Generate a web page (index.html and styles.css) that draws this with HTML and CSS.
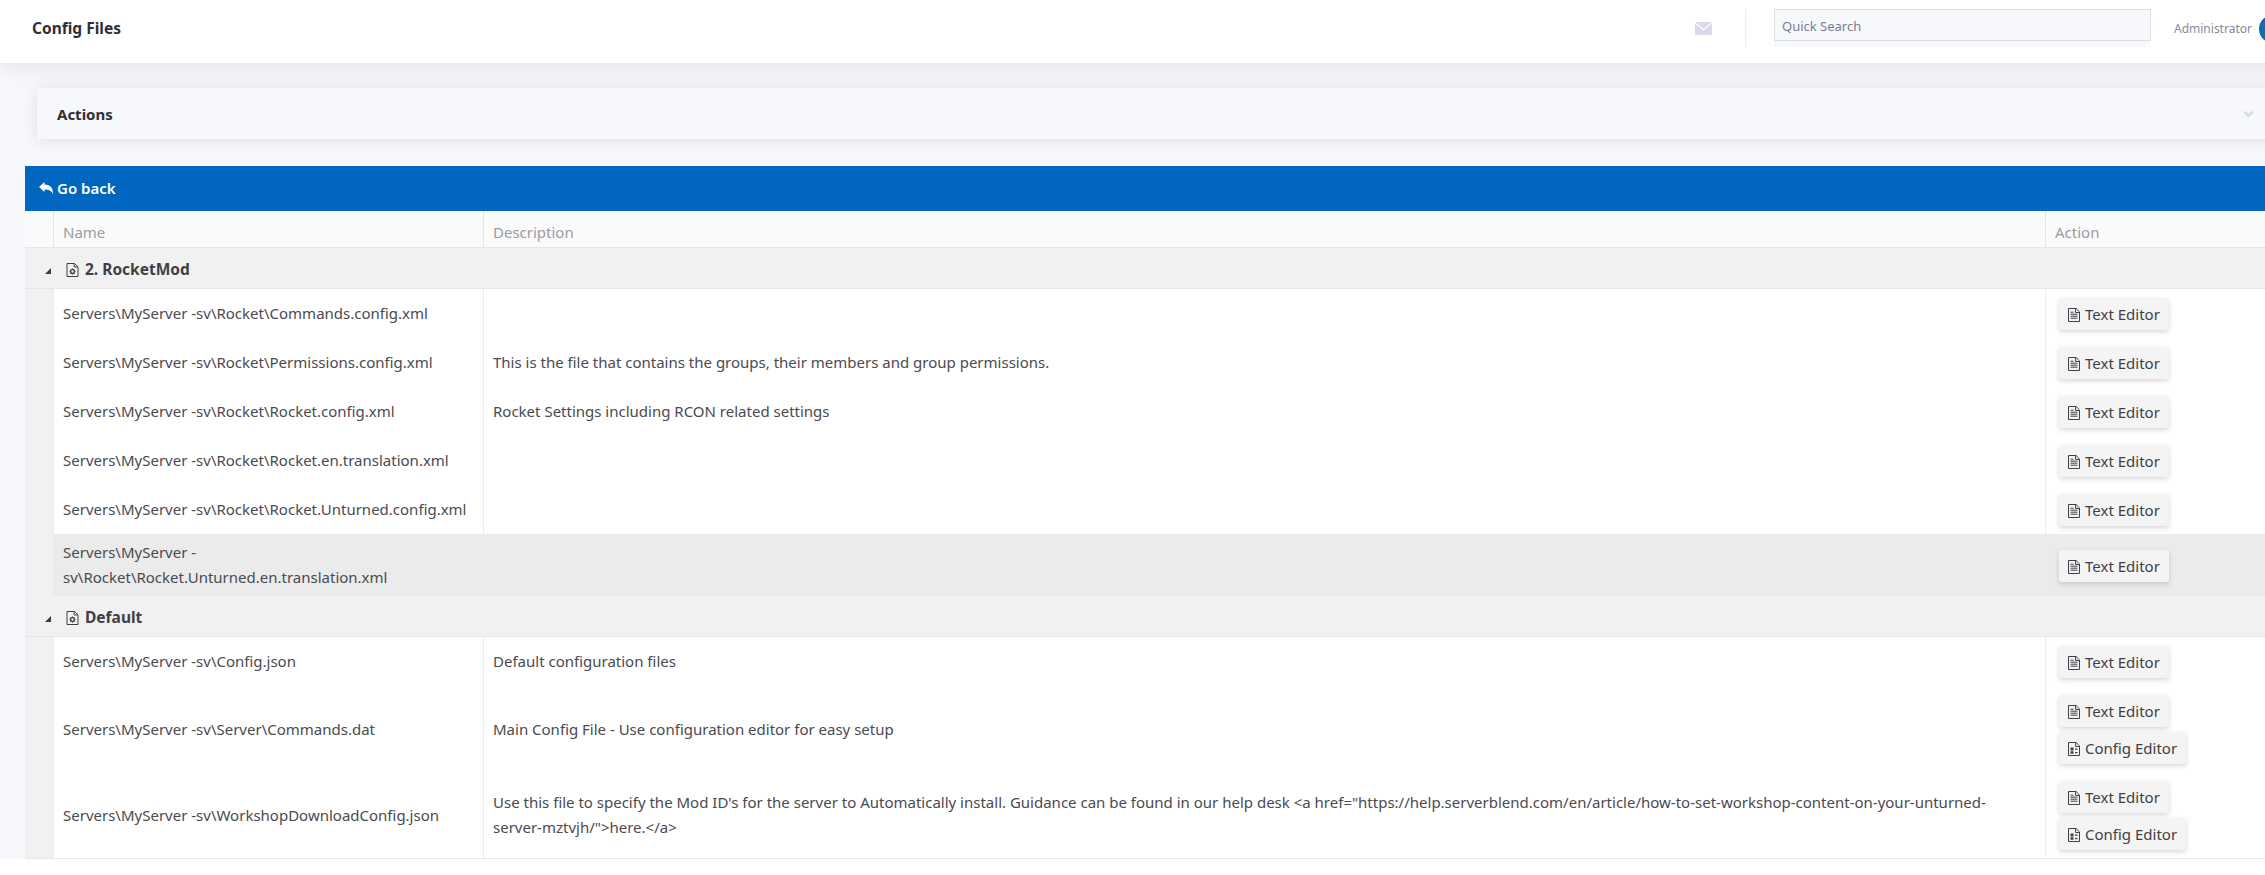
FILE: index.html
```html
<!DOCTYPE html>
<html lang="en">
<head>
<meta charset="utf-8">
<title>Config Files</title>
<link rel="stylesheet" href="styles.css">
</head>
<body>
<svg class="defs" aria-hidden="true">
  <symbol id="i-text" viewBox="0 0 12 14">
    <path d="M.5.5h7.600l3.400 3.400v9.600H.5z" fill="none" stroke="currentColor"/>
    <path d="M7.600.5v4h3.900" fill="none" stroke="currentColor"/>
    <path d="M2.500 6.200h7M2.500 8.200h7M2.500 10.200h7" fill="none" stroke="currentColor"/>
    <path d="M2.500 4.200h3" fill="none" stroke="currentColor"/>
  </symbol>
  <symbol id="i-config" viewBox="0 0 12 14">
    <path d="M.5.5h7.600l3.400 3.400v9.600H.5z" fill="none" stroke="currentColor"/>
    <path d="M7.600.5v4h3.900" fill="none" stroke="currentColor"/>
    <path d="M2.500 5.500h3v3h-3zM2.500 9.200h3v2.600h-3zM7 6.500h2.500v1.200H7zM7 10h2.500v1.200H7z" fill="currentColor"/>
  </symbol>
  <symbol id="i-group" viewBox="0 0 12 14">
    <path d="M.5.5h7.600l3.400 3.400v9.600H.5z" fill="none" stroke="currentColor"/>
    <path d="M7.600.5v3.400h3.900" fill="none" stroke="currentColor"/>
    <circle cx="6" cy="8.500" r="1.900" fill="none" stroke="currentColor" stroke-width="1.300"/>
    <path d="M6 5.400v1.200M6 10.400v1.200M3 8.500h1.200M7.800 8.500H9M3.900 6.400l.8.8M7.300 9.800l.8.8M8.100 6.400l-.8.8M4.700 9.800l-.8.8" stroke="currentColor"/>
  </symbol>
</svg>
<div class="page">
  <header class="topbar">
    <h1 class="title">Config Files</h1>
    <svg class="mail" viewBox="0 0 17 13" aria-hidden="true"><path d="M0 0h17L8.500 7z" fill="currentColor"/><path d="M0 1.600V13h17V1.600L8.500 8.600z" fill="currentColor"/></svg>
    <div class="divider"></div>
    <div class="search"><input class="search-input" type="text" placeholder="Quick Search"></div>
    <span class="user">Administrator</span>
    <span class="avatar"></span>
  </header>
  <main class="content">
    <section class="actions">
      <h2 class="actions-title">Actions</h2>
      <svg class="chevron" viewBox="0 0 12 8" aria-hidden="true"><path d="M1.500 1.500L6 6l4.500-4.500" fill="none" stroke="currentColor" stroke-width="2.800"/></svg>
    </section>
    <section class="grid">
      <div class="toolbar">
        <svg class="reply" viewBox="0 0 14 12" aria-hidden="true"><path d="M0 5L5.500 0v2.600C11.500 2.600 14 6 14 12c-1.500-3-4-4.400-8.500-4.400V10z" fill="currentColor"/></svg>
        <span>Go back</span>
      </div>
      <table class="table">
        <colgroup><col class="c-toggle"><col class="c-name"><col class="c-desc"><col class="c-action"></colgroup>
        <thead>
          <tr><th></th><th>Name</th><th>Description</th><th>Action</th></tr>
        </thead>
        <tbody>
          <tr class="group"><td colspan="4"><span class="caret"></span><svg class="group-icon"><use href="#i-group"/></svg><b>2. RocketMod</b></td></tr>
          <tr><td class="gutter"></td><td>Servers\MyServer -sv\Rocket\Commands.config.xml</td><td></td><td class="act"><a class="btn"><svg class="btn-icon"><use href="#i-text"/></svg>Text Editor</a></td></tr>
          <tr><td class="gutter"></td><td>Servers\MyServer -sv\Rocket\Permissions.config.xml</td><td>This is the file that contains the groups, their members and group permissions.</td><td class="act"><a class="btn"><svg class="btn-icon"><use href="#i-text"/></svg>Text Editor</a></td></tr>
          <tr><td class="gutter"></td><td>Servers\MyServer -sv\Rocket\Rocket.config.xml</td><td>Rocket Settings including RCON related settings</td><td class="act"><a class="btn"><svg class="btn-icon"><use href="#i-text"/></svg>Text Editor</a></td></tr>
          <tr><td class="gutter"></td><td>Servers\MyServer -sv\Rocket\Rocket.en.translation.xml</td><td></td><td class="act"><a class="btn"><svg class="btn-icon"><use href="#i-text"/></svg>Text Editor</a></td></tr>
          <tr><td class="gutter"></td><td>Servers\MyServer -sv\Rocket\Rocket.Unturned.config.xml</td><td></td><td class="act"><a class="btn"><svg class="btn-icon"><use href="#i-text"/></svg>Text Editor</a></td></tr>
          <tr class="hover"><td class="gutter"></td><td>Servers\MyServer -sv\Rocket\Rocket.Unturned.en.translation.xml</td><td></td><td class="act"><a class="btn"><svg class="btn-icon"><use href="#i-text"/></svg>Text Editor</a></td></tr>
          <tr class="group"><td colspan="4"><span class="caret"></span><svg class="group-icon"><use href="#i-group"/></svg><b>Default</b></td></tr>
          <tr><td class="gutter"></td><td>Servers\MyServer -sv\Config.json</td><td>Default configuration files</td><td class="act"><a class="btn"><svg class="btn-icon"><use href="#i-text"/></svg>Text Editor</a></td></tr>
          <tr><td class="gutter"></td><td>Servers\MyServer -sv\Server\Commands.dat</td><td>Main Config File - Use configuration editor for easy setup</td><td class="act"><a class="btn"><svg class="btn-icon"><use href="#i-text"/></svg>Text Editor</a><a class="btn"><svg class="btn-icon"><use href="#i-config"/></svg>Config Editor</a></td></tr>
          <tr><td class="gutter"></td><td>Servers\MyServer -sv\WorkshopDownloadConfig.json</td><td class="long">Use this file to specify the Mod ID's for the server to Automatically install. Guidance can be found in our help desk &lt;a href="https://help.serverblend.com/en/article/how-to-set-workshop-content-on-your-unturned-server-mztvjh/"&gt;here.&lt;/a&gt;</td><td class="act"><a class="btn"><svg class="btn-icon"><use href="#i-text"/></svg>Text Editor</a><a class="btn"><svg class="btn-icon"><use href="#i-config"/></svg>Config Editor</a></td></tr>
        </tbody>
      </table>
    </section>
  </main>
</div>
</body>
</html>
```

FILE: styles.css
```css
* { box-sizing: border-box; }
html, body { margin: 0; padding: 0; background: #fff; }
body {
  font-family: "Noto Sans", "Open Sans", sans-serif;
  font-size: 15px;
  color: #4a4a50;
  overflow: hidden;
  height: 875px;
}
.defs { display: none; }
.page { width: 2320px; background: #f7f8fc; height: 859px; }

.topbar {
  height: 63px;
  background: #fff;
  display: flex;
  align-items: flex-start;
  padding-left: 32px;
  position: relative;
  box-shadow: 0 2px 22px rgba(90, 95, 125, .16);
}
.title { margin: 18px 0 0; font-size: 15.500px; line-height: 20px; font-weight: 700; color: #2f2f36; width: 1663px; }
.mail { width: 17px; height: 13px; margin: 22px 0 0; color: #d8dae8; flex: none; }
.divider { width: 1px; height: 38px; margin: 9px 0 0 33px; background: #ebedf2; flex: none; }
.search { width: 376px; height: 38px; margin: 9px 0 0 28px; background: #f7f8fc; flex: none; }
.search-input {
  display: block; width: 377px; height: 32px; padding: 1px 7px 0;
  font: 13px "Noto Sans", sans-serif; color: #575962;
  background: #f7f8fc; border: 1px solid #dfe0e6; outline: 0;
}
.search-input::placeholder { color: #7b7e8c; opacity: 1; }
.user { margin: 20px 0 0 24px; font-size: 12px; line-height: 18px; color: #878a98; width: 85px; flex: none; }
.avatar { width: 28px; height: 28px; margin-top: 15px; border-radius: 50%; border: 6px solid #0b6fb8; background: #fff; flex: none; }

.content { padding-top: 25px; }
.actions {
  margin-left: 37px; height: 51px;
  background: #f7f8fc;
  border-radius: 4px 0 0 4px;
  display: flex; align-items: center;
  box-shadow: 0 1px 15px rgba(69, 65, 78, .14);
  padding-left: 20px;
}
.actions-title { margin: 0; font-size: 15px; font-weight: 700; color: #2f2f36; width: 2186px; }
.chevron { width: 11px; height: 8px; color: #d8dae8; }

.grid { margin: 27px 0 0 25px; }
.toolbar {
  height: 45px; background: #0066bf; color: #fff;
  display: flex; align-items: center; padding-left: 14px;
  font-weight: 600; font-size: 15px; gap: 4px;
  padding-bottom: 1px;
}
.reply { width: 14px; height: 12px; }

.table { width: 2295px; table-layout: fixed; border-collapse: separate; border-spacing: 0; background: #fff; }
.c-toggle { width: 28px; }
.c-name { width: 430px; }
.c-desc { width: 1562px; }
.table th {
  height: 37px; background: #fafafa; text-align: left; font-weight: 400; color: #9b9ca4;
  padding: 6px 9px 0; border-left: 1px solid #e6e6e6; border-bottom: 1px solid #e6e6e6;
}
.table th:first-child { border-left: 0; }
.table td {
  padding: 6px 9px; line-height: 25px; vertical-align: middle;
  border-left: 1px solid #ececec;
}
.table td.long { padding-right: 30px; }
.table td.gutter { background: #f1f1f1; border-left: 0; padding: 0; }
.table td.act { padding: 9px 10px 8px 13px; }
.table .group td {
  height: 41px; padding: 3px 0 0 20px; background: #f1f1f1; border-left: 0;
  border-bottom: 1px solid #e6e6e6; color: #3f4047; font-size: 15.500px;
}
.group b { font-weight: 700; }
.hover td:not(.gutter) { background: #ebebeb; }
.table tbody tr:last-child td { border-bottom: 1px solid #e6e6e6; }
.caret {
  display: inline-block; width: 0; height: 0; margin-right: 15px; vertical-align: 1px;
  border-style: solid; border-width: 0 0 6px 6px;
  border-color: transparent transparent #3c3c3c transparent;
}
.group-icon { width: 13px; height: 14px; margin-right: 6px; vertical-align: -2px; color: #3f4047; }

.act { white-space: nowrap; }
.btn {
  display: table; height: 32px; line-height: 32px; padding: 0 9px;
  background: #f4f4f4; color: #3f4047; border-radius: 3px;
  box-shadow: 0 2px 5px rgba(0, 0, 0, .16);
}
.btn + .btn { margin-top: 5px; }
.btn-icon { width: 12px; height: 14px; margin-right: 5px; vertical-align: -2px; color: #3f4047; }
```
